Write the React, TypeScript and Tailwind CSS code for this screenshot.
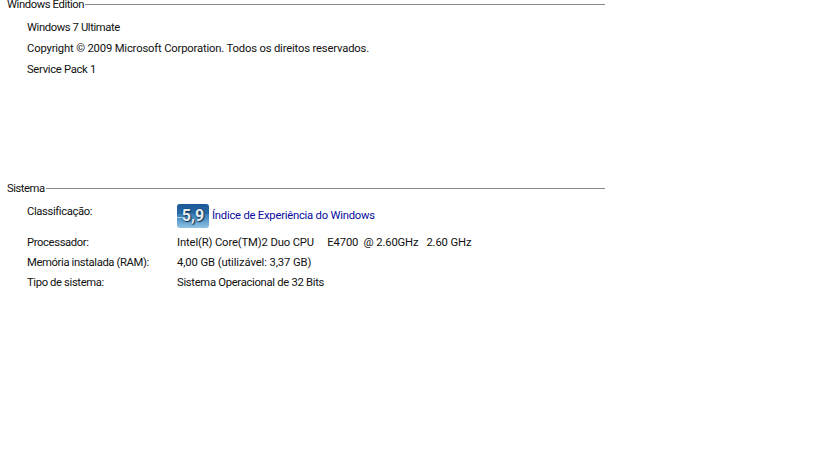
export default function App() {
  return (
    <div className="h-[460px] w-[816px] overflow-hidden bg-white text-[11.25px] leading-4 tracking-[-0.17px] text-[#111] [font-family:Roboto,sans-serif]">
      {/* Windows Edition */}
      <div className="flex h-[9px] w-[605px] items-center gap-px pl-[7px]">
        <span className="leading-[9px] tracking-[-0.4px]">Windows Edition</span>
        <div className="h-px flex-1 bg-[#8a8a8a]" />
      </div>
      <div className="mt-[11px] flex flex-col gap-[5px] pl-[27px]">
        <p className="tracking-[-0.39px]">Windows 7 Ultimate</p>
        <p>Copyright © 2009 Microsoft Corporation. Todos os direitos reservados.</p>
        <p className="tracking-[-0.31px]">Service Pack 1</p>
      </div>

      {/* Sistema */}
      <div className="mt-[102px] flex h-4 w-[605px] items-center gap-px pl-[7px]">
        <span className="pt-[2px] tracking-[-0.45px]">Sistema</span>
        <div className="h-px flex-1 bg-[#8a8a8a]" />
      </div>
      <div className="mt-[4px] flex flex-col pl-[27px]">
        <div className="flex h-[32px]">
          <span className="mt-[4px] w-[150px] tracking-[-0.37px]">Classificação:</span>
          <div className="flex h-[31px] items-center gap-[3px]">
            <div className="relative h-[24px] w-[32px] overflow-hidden rounded-[3px] bg-gradient-to-b from-[#1f5f9e] via-[#3f86bd] to-[#8fc4e4]">
              <div className="absolute inset-x-0 top-0 h-[10px] bg-[#15508c]/40" />
              <div className="absolute left-0 top-[13px] h-px w-[8px] bg-white/60" />
              <span className="absolute inset-0 flex items-center justify-center text-[16px] font-bold tracking-normal text-[#e6ebef] [text-shadow:0_0_2px_#0b3558,1px_1px_1px_#0b3558]">
                5,9
              </span>
            </div>
            <span className="tracking-[-0.23px] text-[#0a0a9e]">Índice de Experiência do Windows</span>
          </div>
        </div>
        <div className="mt-[3px] flex flex-col gap-1">
          <div className="flex">
            <span className="w-[150px] tracking-[-0.37px]">Processador:</span>
            <span className="whitespace-pre tracking-[-0.135px]">Intel(R) Core(TM)2 Duo CPU     E4700  @ 2.60GHz   2.60 GHz</span>
          </div>
          <div className="flex">
            <span className="w-[150px] tracking-[-0.37px]">Memória instalada (RAM):</span>
            <span className="tracking-[-0.1px]">4,00 GB (utilizável: 3,37 GB)</span>
          </div>
          <div className="flex">
            <span className="w-[150px] tracking-[-0.37px]">Tipo de sistema:</span>
            <span className="tracking-[-0.3px]">Sistema Operacional de 32 Bits</span>
          </div>
        </div>
      </div>
    </div>
  );
}
